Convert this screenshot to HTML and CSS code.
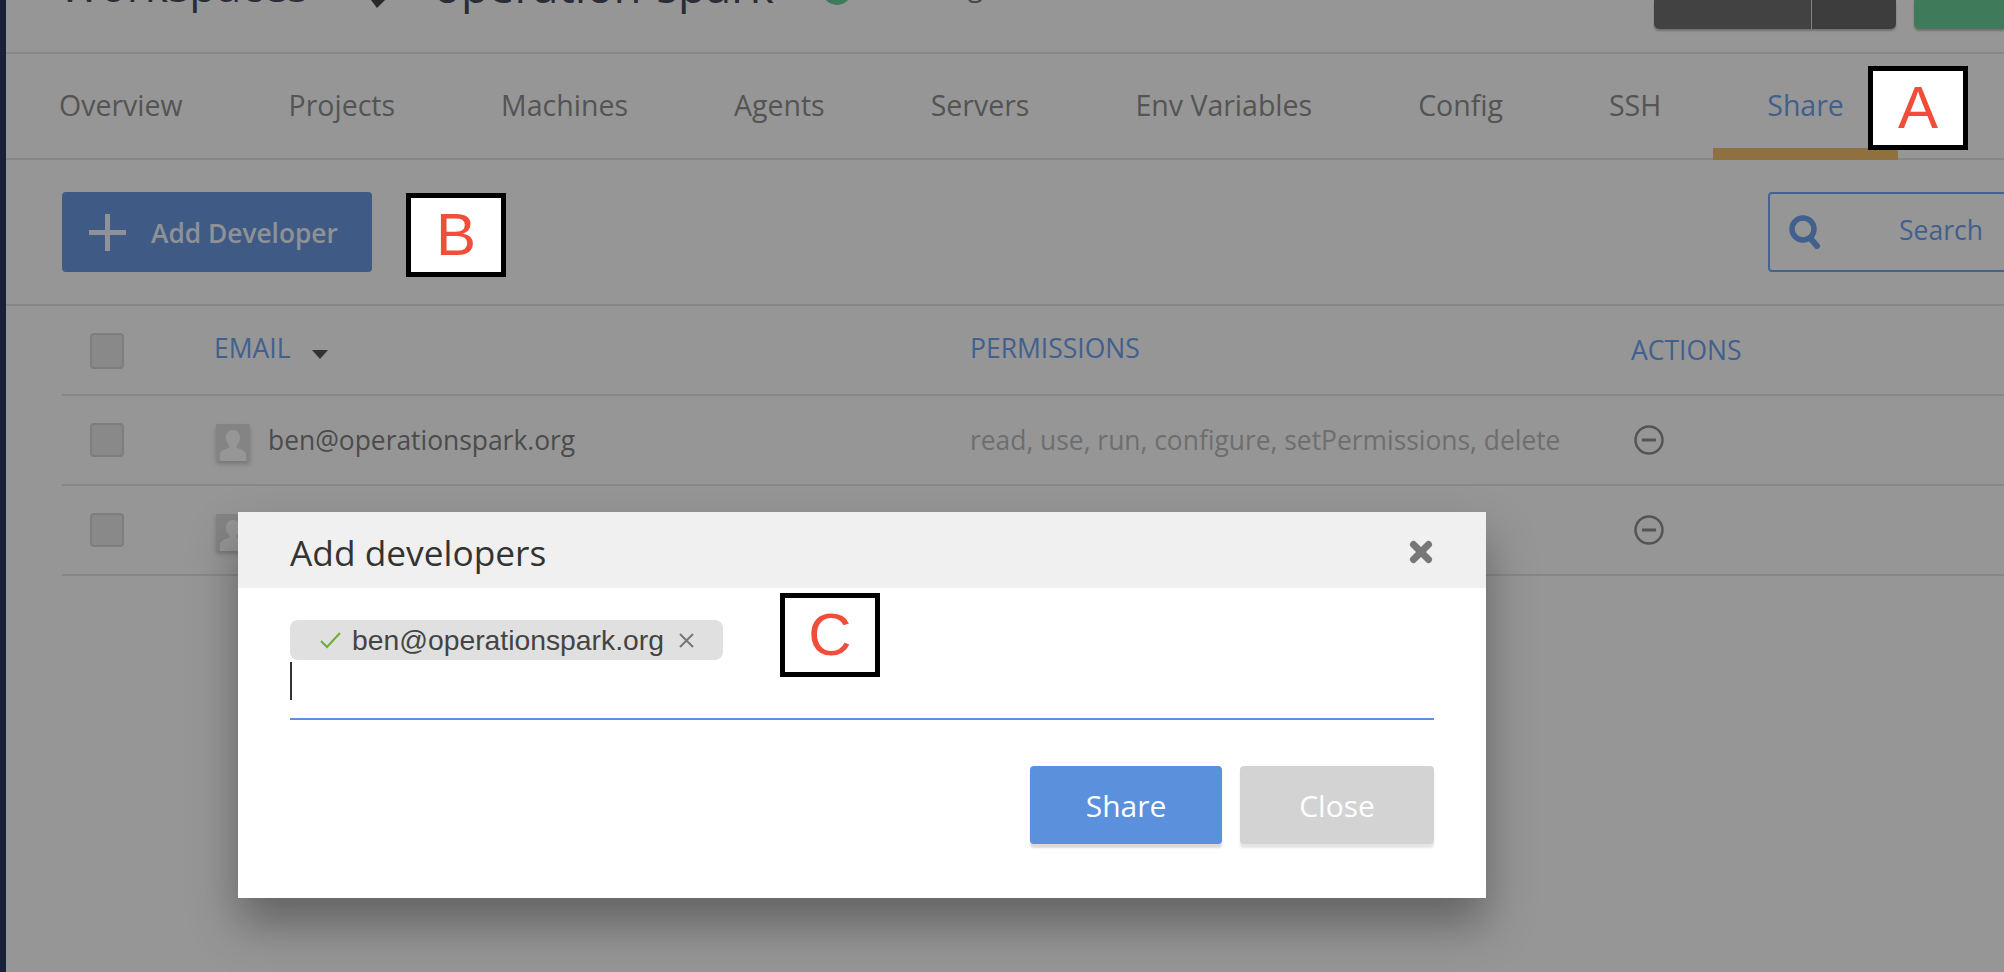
FILE: index.html
```html
<!DOCTYPE html>
<html lang="en">
<head>
    <meta charset="UTF-8">
    <meta name="viewport" content="width=device-width, initial-scale=1.0">
    <title>Workspace Share</title>
    <link rel="stylesheet" href="styles.css">
</head>
<body>
    <div class="page">
        <div class="side-strip"></div>
        <main class="main">
            <header class="topbar">
                <div class="crumbs">
                    <span class="crumb-root">Workspaces</span>
                    <svg class="crumb-pen" width="20" height="40" viewBox="0 0 20 40"><path d="M0 32L6 40 15 31V0H0z" fill="#474747"/></svg>
                    <span class="crumb-name">operation-spark</span>
                    <span class="status-dot"></span>
                    <span class="status-text">Running</span>
                </div>
                <div class="top-actions">
                    <div class="split-btn">
                        <span class="split-main"></span>
                        <span class="split-side"></span>
                    </div>
                    <div class="run-btn"></div>
                </div>
            </header>

            <nav class="tabs">
                <a class="tab">Overview</a>
                <a class="tab">Projects</a>
                <a class="tab">Machines</a>
                <a class="tab">Agents</a>
                <a class="tab">Servers</a>
                <a class="tab">Env Variables</a>
                <a class="tab">Config</a>
                <a class="tab">SSH</a>
                <a class="tab active">Share</a>
            </nav>

            <section class="toolbar">
                <button class="add-btn">
                    <svg width="37" height="37" viewBox="0 0 37 37"><path d="M16 0h5v16h16v5h-16v16h-5v-16h-16v-5h16z" fill="currentColor"/></svg>
                    <span class="add-label">Add Developer</span>
                </button>
                <div class="search-box">
                    <svg width="32" height="34" viewBox="0 0 32 34"><circle cx="14" cy="14" r="11" fill="none" stroke="currentColor" stroke-width="5.500"/><path d="M21 23l7 8" stroke="currentColor" stroke-width="6" stroke-linecap="round"/></svg>
                    <span class="search-label">Search</span>
                </div>
            </section>

            <section class="devs">
                <div class="dev-row dev-head">
                    <span class="check check-head"></span>
                    <div class="col-title col-email">EMAIL <span class="sort-caret"></span></div>
                    <div class="col-title">PERMISSIONS</div>
                    <div class="col-title col-actions">ACTIONS</div>
                </div>
                <div class="dev-row">
                    <span class="check"></span>
                    <div class="dev-email">
                        <svg class="avatar" width="34" height="37" viewBox="0 0 34 37"><rect width="34" height="37" fill="#e0e0e0"/><path d="M17 6c4.500 0 7 3.500 7 8 0 3-1.500 6-3.500 7.500v2c3.500 1.500 8.500 3 9.500 6v7.500h-26v-7.500c1-3 6-4.500 9.500-6v-2c-2-1.500-3.500-4.500-3.500-7.500 0-4.500 2.500-8 7-8z" fill="#fff"/></svg>
                        <span>ben@operationspark.org</span>
                    </div>
                    <div class="dev-perms">read, use, run, configure, setPermissions, delete</div>
                    <svg class="remove" width="30" height="30" viewBox="0 0 30 30"><circle cx="15" cy="15" r="13.500" fill="none" stroke="currentColor" stroke-width="2.500"/><path d="M8 15h14" stroke="currentColor" stroke-width="3"/></svg>
                </div>
                <div class="dev-row">
                    <span class="check"></span>
                    <div class="dev-email">
                        <svg class="avatar" width="34" height="37" viewBox="0 0 34 37"><rect width="34" height="37" fill="#e0e0e0"/><path d="M17 6c4.500 0 7 3.500 7 8 0 3-1.500 6-3.500 7.500v2c3.500 1.500 8.500 3 9.500 6v7.500h-26v-7.500c1-3 6-4.500 9.500-6v-2c-2-1.500-3.500-4.500-3.500-7.500 0-4.500 2.500-8 7-8z" fill="#fff"/></svg>
                    </div>
                    <div class="dev-perms"></div>
                    <svg class="remove" width="30" height="30" viewBox="0 0 30 30"><circle cx="15" cy="15" r="13.500" fill="none" stroke="currentColor" stroke-width="2.500"/><path d="M8 15h14" stroke="currentColor" stroke-width="3"/></svg>
                </div>
            </section>
        </main>
    </div>

    <div class="overlay"></div>

    <!-- Add developers dialog -->
    <div class="modal">
        <div class="modal-head">
            <h2>Add developers</h2>
            <svg width="24" height="24" viewBox="0 0 24 24"><path d="M4.500 4.500l15 15M19.500 4.500l-15 15" stroke="#777" stroke-width="7" stroke-linecap="round"/></svg>
        </div>
        <div class="modal-body">
            <div class="email-field">
                <div class="email-tag">
                    <svg width="21" height="17" viewBox="0 0 21 17"><path d="M1 9l6 6L20 1" fill="none" stroke="#6fae2e" stroke-width="2"/></svg>
                    <span>ben@operationspark.org</span>
                    <svg width="15" height="15" viewBox="0 0 15 15"><path d="M1 1l13 13M14 1L1 14" stroke="#777" stroke-width="2"/></svg>
                </div>
                <div class="text-caret"></div>
            </div>
            <div class="modal-actions">
                <button class="btn btn-share">Share</button>
                <button class="btn btn-close">Close</button>
            </div>
        </div>
    </div>

    <!-- Callout labels -->
    <div class="callout callout-a">A</div>
    <div class="callout callout-b">B</div>
    <div class="callout callout-c">C</div>
</body>
</html>
```

FILE: styles.css
```css
/* General styles */
html, body {
    margin: 0;
    height: 100%;
    overflow: hidden;
}

body {
    font-family: 'Open Sans', sans-serif;
    background: #fff;
    color: #818181;
    position: relative;
}

.page {
    display: flex;
    height: 972px;
}

.side-strip {
    width: 6px;
    flex: none;
    background: #2c385f;
}

.main {
    flex: 1;
    min-width: 0;
    overflow: hidden;
}

/* Top bar, scrolled mostly out of view */
.topbar {
    height: 52px;
    border-bottom: 2px solid #e6e6e6;
    display: flex;
    justify-content: space-between;
    padding-left: 53px;
}

.crumbs {
    display: flex;
    align-items: center;
    height: 100px;
    margin-top: -65px;
    color: #484c5c;
}

.crumb-root {
    font-size: 44.400px;
}

.crumb-name {
    font-size: 45.600px;
    margin-left: 42px;
}

.crumb-pen {
    margin-left: 63px;
    margin-top: 6px;
    flex: none;
}

.status-dot {
    width: 30px;
    height: 30px;
    border-radius: 50%;
    background: #6bcf99;
    margin-left: 48px;
    margin-top: 10px;
}

.status-text {
    font-size: 28px;
    margin-left: 23px;
    color: #7a7a7a;
}

.top-actions {
    display: flex;
    gap: 18px;
    align-items: flex-start;
}

.split-btn {
    display: flex;
    height: 29px;
    width: 242px;
    border-radius: 0 0 5px 5px;
    overflow: hidden;
    box-shadow: 0 2px 2px rgba(0, 0, 0, 0.25);
}

.split-main {
    width: 157px;
    background: #707070;
    border-right: 1px solid #ddd;
}

.split-side {
    flex: 1;
    background: #686868;
}

.run-btn {
    width: 90px;
    height: 29px;
    background: #6bcf99;
    border-radius: 0 0 0 5px;
    box-shadow: 0 2px 2px rgba(0, 0, 0, 0.25);
}

/* Tabs */
.tabs {
    display: flex;
    height: 104px;
    border-bottom: 2px solid #e6e6e6;
}

.tab {
    font-size: 28.500px;
    color: #909090;
    padding: 0 54px;
    height: 104px;
    line-height: 102px;
    margin-right: -2px;
}

.tab:first-child {
    padding-left: 53px;
}

.tab.active {
    color: #6fa3f2;
    height: 94px;
    border-bottom: 12px solid #f2c06b;
}

/* Toolbar */
.toolbar {
    display: flex;
    justify-content: space-between;
    align-items: center;
    height: 146px;
    padding-left: 56px;
    margin-right: -60px;
    border-bottom: 2px solid #e6e6e6;
    box-sizing: border-box;
}

.add-btn {
    display: flex;
    align-items: center;
    gap: 25px;
    width: 310px;
    height: 80px;
    padding: 0 0 0 27px;
    border: none;
    border-radius: 4px;
    background: #6b99e0;
    color: #f2f6ff;
    font-family: 'Open Sans', sans-serif;
    font-size: 26.300px;
    font-weight: 600;
}

.add-label {
    margin-top: 2px;
}

.search-box {
    display: flex;
    align-items: center;
    width: 296px;
    height: 80px;
    box-sizing: border-box;
    padding-left: 19px;
    border: 2px solid #75a8f3;
    border-radius: 4px;
    color: #6fa3f2;
}

.search-label {
    font-size: 26.500px;
    margin-left: 78px;
    margin-top: -4px;
}

/* Developers table */
.devs {
    margin-left: 56px;
}

.dev-row {
    display: grid;
    grid-template-columns: 126px 754px 661px 1fr;
    align-items: center;
    height: 90px;
    box-sizing: border-box;
    padding-left: 28px;
    border-bottom: 2px solid #e6e6e6;
}

.check {
    width: 34px;
    height: 34px;
    box-sizing: border-box;
    background: #e9e9e9;
    border: 2px solid #d6d6d6;
    border-radius: 4px;
}

.check-head {
    height: 36px;
    margin-top: 2px;
}

.col-title {
    font-size: 26.500px;
    color: #6fa3f2;
    margin-top: -4px;
}

.col-email {
    margin-left: -2px;
}

.col-actions {
    margin-top: 0;
}

.sort-caret {
    display: inline-block;
    width: 0;
    height: 0;
    margin-left: 15px;
    vertical-align: -1px;
    border-left: 8px solid transparent;
    border-right: 8px solid transparent;
    border-top: 9px solid #565656;
}

.dev-email {
    display: flex;
    align-items: center;
    gap: 18px;
    font-size: 26.400px;
}

.avatar {
    flex: none;
    margin-top: 4px;
    filter: drop-shadow(0 3px 2px rgba(0, 0, 0, 0.2));
}

.dev-perms {
    font-size: 26.400px;
    color: #bcbcbc;
}

.remove {
    color: #909090;
    margin-left: 3px;
}

.overlay {
    position: absolute;
    inset: 0;
    background: rgba(0, 0, 0, 0.41);
}

/* Modal */
.modal {
    position: absolute;
    left: 238px;
    top: 512px;
    width: 1248px;
    height: 386px;
    background: #fff;
    box-shadow: 0 26px 44px rgba(0, 0, 0, 0.34);
}

.modal-head {
    display: flex;
    justify-content: space-between;
    align-items: center;
    height: 76px;
    box-sizing: border-box;
    padding: 4px 53px 0 52px;
    background: #f0f0f0;
}

.modal-head h2 {
    margin: 0;
    font-size: 35.300px;
    font-weight: 400;
    color: #333;
}

.modal-body {
    padding: 32px 52px 0;
}

.email-field {
    height: 98px;
    border-bottom: 2px solid #5b90de;
}

.email-tag {
    display: inline-flex;
    align-items: center;
    height: 40px;
    padding: 0 29px 0 30px;
    border-radius: 8px;
    background: #e0e0e0;
    font-family: 'Liberation Sans', sans-serif;
    font-size: 28.300px;
    color: #444;
}

.email-tag span {
    margin: 0 15px 0 11px;
}

.text-caret {
    width: 2px;
    height: 38px;
    margin-top: 2px;
    background: #333;
}

.modal-actions {
    display: flex;
    justify-content: flex-end;
    gap: 18px;
    margin-top: 46px;
}

.btn {
    height: 78px;
    border: none;
    border-radius: 4px;
    color: #fff;
    font-family: 'Open Sans', sans-serif;
    font-size: 30px;
}

.btn-share {
    width: 192px;
    background: #5b90dd;
    box-shadow: 0 4px 2px rgba(0, 0, 0, 0.15);
}

.btn-close {
    width: 194px;
    background: #d3d3d3;
    box-shadow: 0 4px 2px rgba(0, 0, 0, 0.1);
}

/* Callout labels */
.callout {
    position: absolute;
    box-sizing: border-box;
    width: 100px;
    height: 84px;
    border: 5px solid #000;
    background: #fff;
    color: #f04e3a;
    font-family: 'Liberation Sans', sans-serif;
    font-size: 60px;
    line-height: 74px;
    text-align: center;
}

.callout-a {
    left: 1868px;
    top: 66px;
}

.callout-b {
    left: 406px;
    top: 193px;
}

.callout-c {
    left: 780px;
    top: 593px;
}
```
